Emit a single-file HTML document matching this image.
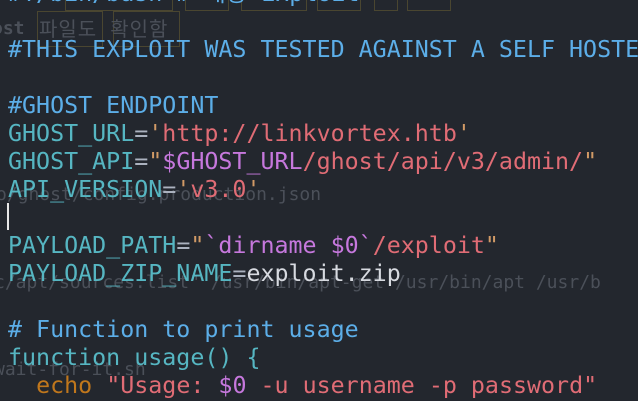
<!DOCTYPE html>
<html><head><meta charset="utf-8"><style>
html,body{margin:0;padding:0;width:638px;height:401px;overflow:hidden;background:#23272e;}
#wrap{position:absolute;left:0;top:0;width:638px;height:401px;overflow:hidden;}
.g{position:absolute;font-family:"DejaVu Sans Mono","Noto Sans CJK KR",monospace;color:#4b5059;font-size:18px;white-space:pre;line-height:20px;}
.box{position:absolute;border:1px solid #4a4630;}
#code{position:absolute;left:8px;top:-20px;font-family:"DejaVu Sans Mono","Liberation Mono",monospace;font-size:23.3px;line-height:28px;white-space:pre;color:#abb2bf;}
.c{color:#5caee8}.v{color:#56b6c2}.s{color:#e06c75}.p{color:#c678dd}.q{color:#d19a66}.w{color:#d7dae0}.e{color:#c0771c}
.cur{position:absolute;left:7px;top:203px;width:2px;height:27px;background:#e8e8e8;}
</style></head><body><div id="wrap">
<div class="box" style="left:65px;top:-6px;width:106px;height:15px"></div>
<div class="box" style="left:185px;top:-6px;width:42px;height:15px"></div>
<div class="box" style="left:241px;top:-6px;width:64px;height:15px"></div>
<div class="box" style="left:317px;top:-6px;width:42px;height:15px"></div>
<div class="box" style="left:374px;top:-6px;width:22px;height:15px"></div>
<div class="box" style="left:407px;top:-6px;width:42px;height:15px"></div>
<div class="box" style="left:37px;top:11px;width:64px;height:34px"></div>
<div class="box" style="left:113px;top:11px;width:65px;height:34px"></div>
<div class="g" style="left:-8px;top:19px;font-weight:bold">ost</div>
<div class="g" style="left:39px;top:17px;font-size:20px;line-height:24px;letter-spacing:1px">파일도 확인함</div>
<div class="g" style="left:-4px;top:185px">o/ghost/config.production.json</div>
<div class="g" style="left:-6px;top:273px">c/apt/sources.list" /usr/bin/apt-get /usr/bin/apt /usr/b</div>
<div class="g" style="left:-6px;top:360px">wait-for-it.sh</div>
<div id="code"><span class="c">#!/bin/bash # 해당 Exploit</span>

<span class="c">#THIS EXPLOIT WAS TESTED AGAINST A SELF HOSTE</span>

<span class="c">#GHOST ENDPOINT</span>
<span class="v">GHOST_URL</span>=<span class="q">'</span><span class="s">http://linkvortex.htb</span><span class="q">'</span>
<span class="v">GHOST_API</span>=<span class="q">"</span><span class="p">$GHOST_URL</span><span class="s">/ghost/api/v3/admin/</span><span class="q">"</span>
<span class="v">API_VERSION</span>=<span class="q">'</span><span class="s">v3.0</span><span class="q">'</span>

<span class="v">PAYLOAD_PATH</span>=<span class="q">"</span><span class="p">`dirname $0`</span><span class="s">/exploit</span><span class="q">"</span>
<span class="v">PAYLOAD_ZIP_NAME</span>=<span class="w">exploit.zip</span>

<span class="c"># Function to print usage</span>
<span class="v">function usage() {</span>
  <span class="e">echo</span> <span class="s">"Usage: </span><span class="p">$0</span><span class="s"> -u username -p password"</span>
</div>
<div class="cur"></div>
</div></body></html>
